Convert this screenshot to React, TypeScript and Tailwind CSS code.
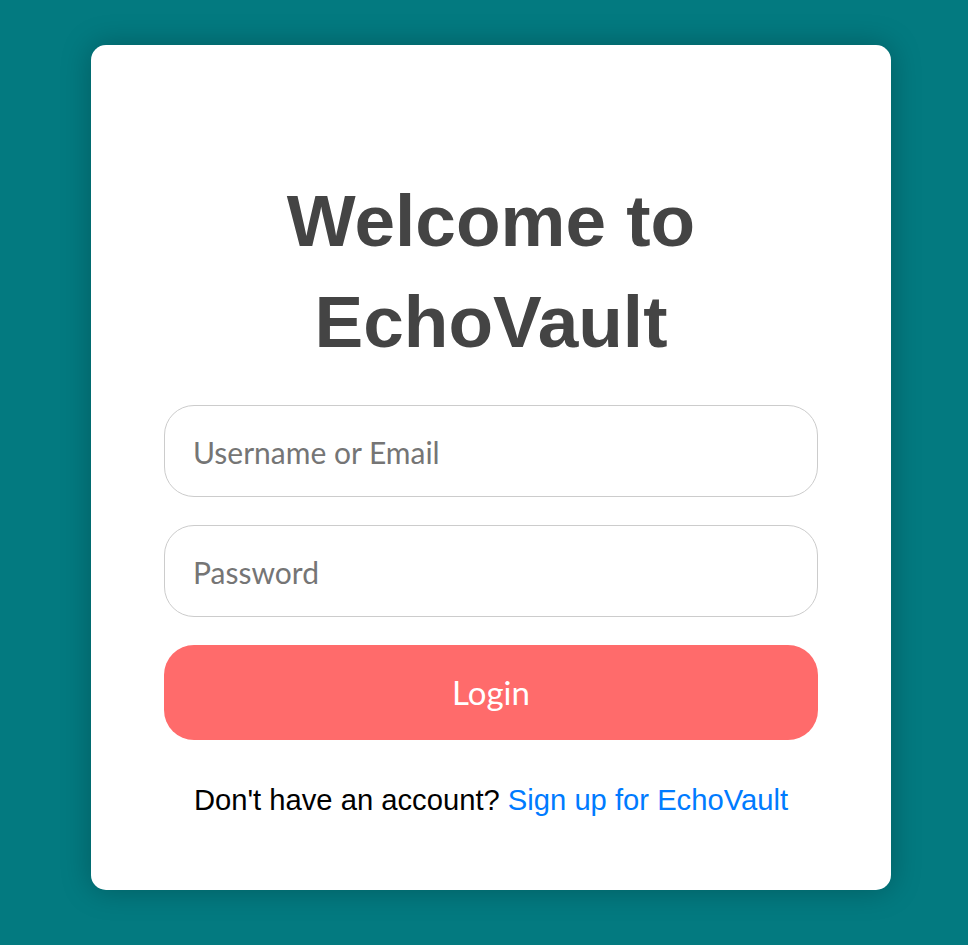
export default function App() {
  return (
    <div className="min-h-[945px] w-full bg-[#037a80] pt-[45px] pl-[91px]">
      <div className="flex h-[845px] w-[800px] flex-col rounded-[15px] bg-white px-[73px] pt-[125px] shadow-[0_0_30px_rgba(0,0,0,0.25)]">
        <h1 className="text-center text-[73px] font-bold leading-[101px] text-[#444444] [font-family:'Liberation_Sans',Arial,sans-serif]">
          Welcome to EchoVault
        </h1>
        <div className="mt-[33px] flex flex-col gap-[28px]">
          <input
            type="text"
            placeholder="Username or Email"
            className="h-[92px] w-full rounded-[30px] border border-[#cccccc] bg-white px-[28px] pt-[2px] text-[30px] text-[#333] outline-none placeholder:text-[#757575] [font-family:Lato,sans-serif]"
          />
          <input
            type="password"
            placeholder="Password"
            className="h-[92px] w-full rounded-[30px] border border-[#cccccc] bg-white px-[28px] pt-[2px] text-[30px] text-[#333] outline-none placeholder:text-[#757575] [font-family:Lato,sans-serif]"
          />
          <button
            type="button"
            className="h-[95px] w-full rounded-[30px] bg-[#ff6b6b] text-[33px] text-white [font-family:Lato,sans-serif]"
          >
            Login
          </button>
        </div>
        <p className="mt-[39px] text-center text-[29.2px] leading-[1.5] text-black [font-family:'Liberation_Sans',Arial,sans-serif]">
          Don't have an account?{' '}
          <a href="#" className="text-[#007bff]">
            Sign up for EchoVault
          </a>
        </p>
      </div>
    </div>
  );
}
